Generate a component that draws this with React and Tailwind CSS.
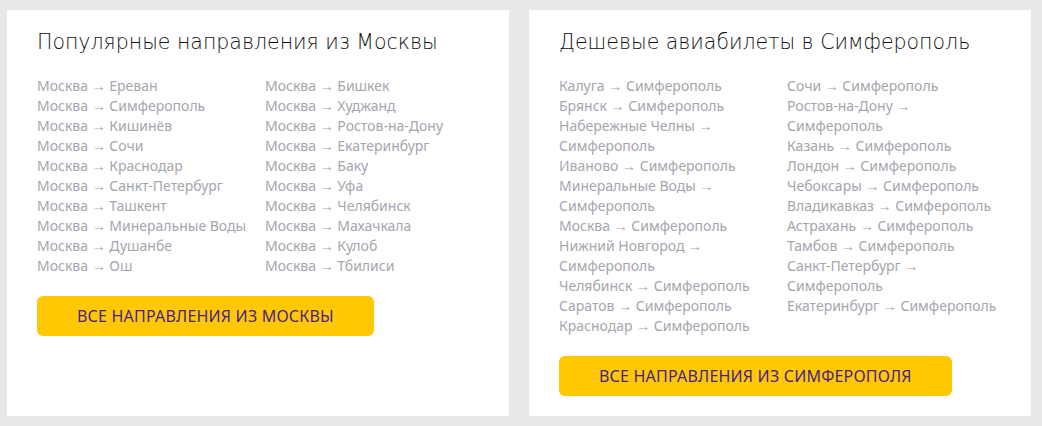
const moscow = [
  ["Москва → Ереван", "Москва → Симферополь", "Москва → Кишинёв", "Москва → Сочи", "Москва → Краснодар", "Москва → Санкт-Петербург", "Москва → Ташкент", "Москва → Минеральные Воды", "Москва → Душанбе", "Москва → Ош"],
  ["Москва → Бишкек", "Москва → Худжанд", "Москва → Ростов-на-Дону", "Москва → Екатеринбург", "Москва → Баку", "Москва → Уфа", "Москва → Челябинск", "Москва → Махачкала", "Москва → Кулоб", "Москва → Тбилиси"],
];

const simf = [
  ["Калуга → Симферополь", "Брянск → Симферополь", "Набережные Челны → Симферополь", "Иваново → Симферополь", "Минеральные Воды → Симферополь", "Москва → Симферополь", "Нижний Новгород → Симферополь", "Челябинск → Симферополь", "Саратов → Симферополь", "Краснодар → Симферополь"],
  ["Сочи → Симферополь", "Ростов-на-Дону → Симферополь", "Казань → Симферополь", "Лондон → Симферополь", "Чебоксары → Симферополь", "Владикавказ → Симферополь", "Астрахань → Симферополь", "Тамбов → Симферополь", "Санкт-Петербург → Симферополь", "Екатеринбург → Симферополь"],
];

const Card = ({ title, cols, button }) => (
  <div className="bg-white w-[502px] pt-[18px] pb-5 pl-[30px] pr-[30px]">
    <h2 className="text-[20.5px] leading-[28px] font-extralight text-[#111] font-['DejaVu_Sans',sans-serif]">{title}</h2>
    <div className="mt-5 flex">
      {cols.map((col, i) => (
        <ul key={i} className={i === 0 ? "w-[228px] pr-4" : "flex-1"}>
          {col.map((t) => (
            <li key={t} className="text-[14px] leading-[20px] text-[#a5a5ad]">
              <a href="#">{t}</a>
            </li>
          ))}
        </ul>
      ))}
    </div>
    <button className="mt-5 h-10 px-10 rounded-md bg-[#ffc800] text-[16px] tracking-[0.2px] text-[#4a1f8f] uppercase">
      {button}
    </button>
  </div>
);

export default function App() {
  return (
    <div
      className="w-[1042px] h-[426px] bg-[#e8e8e8] pt-[10px] pl-[7px]"
      style={{ fontFamily: '"Noto Sans", "Open Sans", sans-serif' }}
    >
      <div className="flex gap-5 h-[406px]">
        <Card title="Популярные направления из Москвы" cols={moscow} button="Все направления из Москвы" />
        <Card title="Дешевые авиабилеты в Симферополь" cols={simf} button="Все направления из Симферополя" />
      </div>
    </div>
  );
}
